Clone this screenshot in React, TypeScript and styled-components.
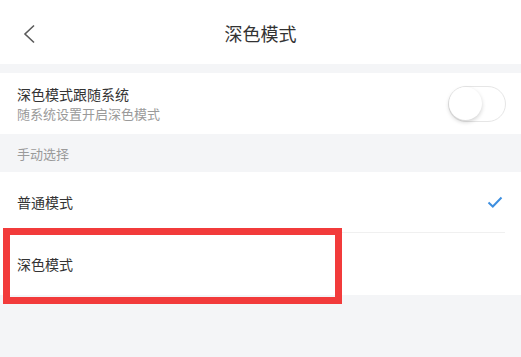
import React, { useState } from "react";
import styled, { createGlobalStyle } from "styled-components";

const GlobalStyle = createGlobalStyle`
  html, body {
    margin: 0;
    padding: 0;
    background: #f4f5f7;
    font-family: "Noto Sans CJK SC", "Noto Sans", sans-serif;
  }
`;

const Check = () => (
  <svg width="16" height="12" viewBox="0 0 16 12">
    <path
      d="M1.5 6.5 L5.8 10.5 L14.5 1.5"
      fill="none"
      stroke="#3d8fe0"
      strokeWidth="2"
    />
  </svg>
);

const App = () => {
  const [follow, setFollow] = useState<boolean>(false);
  const [mode, setMode] = useState<string>("normal");

  return (
    <Page>
      <GlobalStyle />
      <Header>
        <Back>
          <svg width="14" height="20" viewBox="0 0 14 20">
            <path
              d="M12 1.5 L3 10 L12 18.5"
              fill="none"
              stroke="#5a5a5a"
              strokeWidth="1.6"
            />
          </svg>
        </Back>
        <Title>深色模式</Title>
      </Header>

      <Group>
        <Row height={61}>
          <TextCol>
            <Label>深色模式跟随系统</Label>
            <SubLabel>随系统设置开启深色模式</SubLabel>
          </TextCol>
          <Switch on={follow} onClick={() => setFollow(!follow)}>
            <Knob on={follow} />
          </Switch>
        </Row>
      </Group>

      <SectionTitle>手动选择</SectionTitle>

      <Group>
        <Row height={61} divider onClick={() => setMode("normal")}>
          <Label>普通模式</Label>
          {mode === "normal" && <Check />}
        </Row>
        <Row height={62} onClick={() => setMode("dark")}>
          <Label>深色模式</Label>
          {mode === "dark" && <Check />}
        </Row>
        <Highlight />
      </Group>
    </Page>
  );
};

export default App;

const Page = styled.div`
  width: 521px;
  height: 357px;
  background: #f4f5f7;
  overflow: hidden;
`;

const Header = styled.div`
  height: 64px;
  background: #fff;
  display: flex;
  align-items: center;
  justify-content: center;
  position: relative;
  margin-bottom: 9px;
`;

const Back = styled.div`
  position: absolute;
  left: 22px;
  top: 24px;
  display: flex;
`;

const Title = styled.div`
  font-size: 18px;
  color: #333;
  margin-top: 1px;
`;

const Group = styled.div`
  background: #fff;
  position: relative;
`;

const Row = styled.div<{ height: number; divider?: boolean }>`
  height: ${(p) => p.height}px;
  margin: 0 16px 0 17px;
  display: flex;
  align-items: center;
  justify-content: space-between;
  box-sizing: border-box;
  border-bottom: ${(p) => (p.divider ? "1px solid #f0f0f0" : "none")};
  cursor: pointer;

  svg {
    margin-right: 2px;
  }
`;

const TextCol = styled.div`
  display: flex;
  flex-direction: column;
  gap: 1px;
`;

const Label = styled.div`
  font-size: 14px;
  color: #333;
  line-height: 20px;
`;

const SubLabel = styled.div`
  font-size: 13px;
  color: #9a9a9a;
  line-height: 18px;
`;

const Switch = styled.div<{ on: boolean }>`
  width: 58px;
  height: 36px;
  border-radius: 18px;
  box-sizing: border-box;
  border: 1.5px solid #e6e6e6;
  background: ${(p) => (p.on ? "#3d8fe0" : "#fff")};
  position: relative;
  margin-right: -1px;
  margin-top: 1px;
  cursor: pointer;
`;

const Knob = styled.div<{ on: boolean }>`
  position: absolute;
  top: 0;
  left: ${(p) => (p.on ? "22px" : "0")};
  width: 33px;
  height: 33px;
  border-radius: 50%;
  background: #fff;
  box-shadow: 0 2px 4px rgba(0, 0, 0, 0.18);
`;

const SectionTitle = styled.div`
  height: 38px;
  padding-left: 17px;
  display: flex;
  align-items: center;
  font-size: 13px;
  color: #9a9a9a;
`;

const Highlight = styled.div`
  position: absolute;
  left: 3px;
  top: 56px;
  width: 339px;
  height: 76px;
  box-sizing: border-box;
  border: 7px solid #f23b3b;
  pointer-events: none;
`;
